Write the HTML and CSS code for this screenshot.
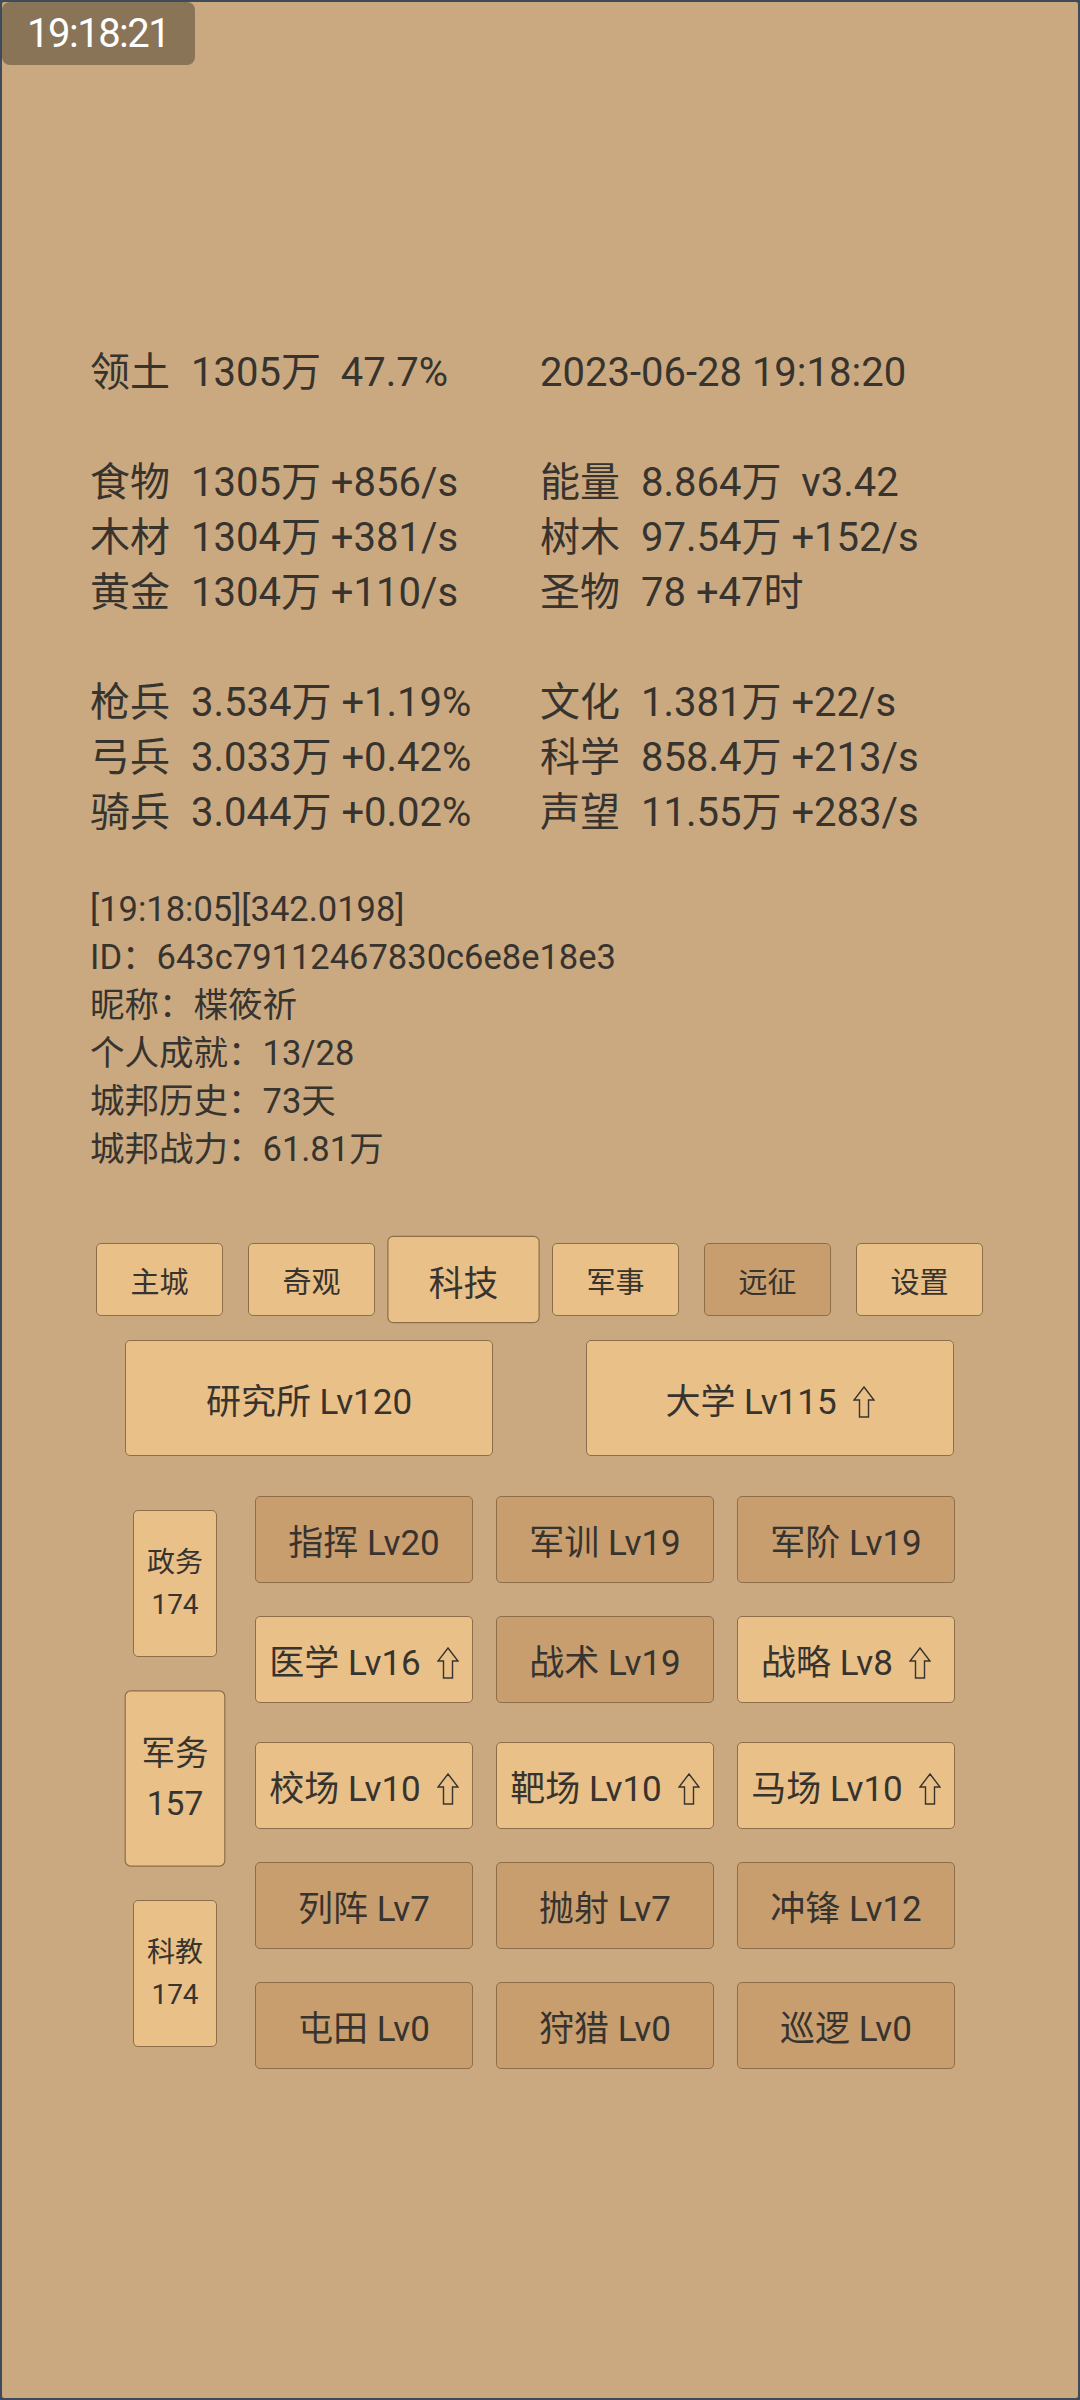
FILE: index.html
```html
<!DOCTYPE html>
<html lang="zh-CN">
<head>
  <meta charset="UTF-8" />
  <meta name="viewport" content="width=device-width, initial-scale=1.0" />
  <title>城邦</title>
  <link rel="stylesheet" href="styles.css">
</head>
<body>
  <div class="screen">

    <!-- Clock badge -->
    <div class="clock">19:18:21</div>

    <!-- Resource stats -->
    <div class="stats">
      <div class="group">
        <div class="cell"><span class="label">领土</span>1305万  47.7%</div>
        <div class="cell">2023-06-28 19:18:20</div>
      </div>
      <div class="group">
        <div class="cell"><span class="label">食物</span>1305万 +856/s</div>
        <div class="cell"><span class="label">能量</span>8.864万  v3.42</div>
        <div class="cell"><span class="label">木材</span>1304万 +381/s</div>
        <div class="cell"><span class="label">树木</span>97.54万 +152/s</div>
        <div class="cell"><span class="label">黄金</span>1304万 +110/s</div>
        <div class="cell"><span class="label">圣物</span>78 +47时</div>
      </div>
      <div class="group">
        <div class="cell"><span class="label">枪兵</span>3.534万 +1.19%</div>
        <div class="cell"><span class="label">文化</span>1.381万 +22/s</div>
        <div class="cell"><span class="label">弓兵</span>3.033万 +0.42%</div>
        <div class="cell"><span class="label">科学</span>858.4万 +213/s</div>
        <div class="cell"><span class="label">骑兵</span>3.044万 +0.02%</div>
        <div class="cell"><span class="label">声望</span>11.55万 +283/s</div>
      </div>
    </div>

    <!-- Player info -->
    <div class="info">
      <div>[19:18:05][342.0198]</div>
      <div>ID：643c79112467830c6e8e18e3</div>
      <div>昵称：楪筱祈</div>
      <div>个人成就：13/28</div>
      <div>城邦历史：73天</div>
      <div>城邦战力：61.81万</div>
    </div>

    <!-- Tabs -->
    <div class="tabs">
      <button class="tab">主城</button>
      <button class="tab">奇观</button>
      <button class="tab active">科技</button>
      <button class="tab">军事</button>
      <button class="tab dark">远征</button>
      <button class="tab">设置</button>
    </div>

    <!-- Buildings -->
    <div class="buildings">
      <button class="big">研究所 Lv120</button>
      <button class="big">大学 Lv115<svg class="up" viewBox="0 0 22 32"><path d="M11 1 L21 14 L15.5 14 L15.5 31 L6.5 31 L6.5 14 L1 14 Z"/></svg></button>
    </div>

    <!-- Tech tree -->
    <div class="tech">
      <div class="side">
        <button class="cat">政务<br>174</button>
        <button class="cat active">军务<br>157</button>
        <button class="cat">科教<br>174</button>
      </div>
      <div class="grid">
        <div class="row">
          <button class="item dark">指挥 Lv20</button>
          <button class="item dark">军训 Lv19</button>
          <button class="item dark">军阶 Lv19</button>
        </div>
        <div class="row">
          <button class="item">医学 Lv16<svg class="up" viewBox="0 0 22 32"><path d="M11 1 L21 14 L15.5 14 L15.5 31 L6.5 31 L6.5 14 L1 14 Z"/></svg></button>
          <button class="item dark">战术 Lv19</button>
          <button class="item">战略 Lv8<svg class="up" viewBox="0 0 22 32"><path d="M11 1 L21 14 L15.5 14 L15.5 31 L6.5 31 L6.5 14 L1 14 Z"/></svg></button>
        </div>
        <div class="row shifted">
          <button class="item">校场 Lv10<svg class="up" viewBox="0 0 22 32"><path d="M11 1 L21 14 L15.5 14 L15.5 31 L6.5 31 L6.5 14 L1 14 Z"/></svg></button>
          <button class="item">靶场 Lv10<svg class="up" viewBox="0 0 22 32"><path d="M11 1 L21 14 L15.5 14 L15.5 31 L6.5 31 L6.5 14 L1 14 Z"/></svg></button>
          <button class="item">马场 Lv10<svg class="up" viewBox="0 0 22 32"><path d="M11 1 L21 14 L15.5 14 L15.5 31 L6.5 31 L6.5 14 L1 14 Z"/></svg></button>
        </div>
        <div class="row">
          <button class="item dark">列阵 Lv7</button>
          <button class="item dark">抛射 Lv7</button>
          <button class="item dark">冲锋 Lv12</button>
        </div>
        <div class="row">
          <button class="item dark">屯田 Lv0</button>
          <button class="item dark">狩猎 Lv0</button>
          <button class="item dark">巡逻 Lv0</button>
        </div>
      </div>
    </div>

  </div>
</body>
</html>
```

FILE: styles.css
```css
* {
  margin: 0;
  padding: 0;
  box-sizing: border-box;
}

body {
  background: #3e4b5b;
  font-family: Roboto, "Noto Sans CJK SC", sans-serif;
  color: #37332e;
}

.screen {
  position: relative;
  width: 1080px;
  height: 2400px;
  border: 2px solid #3e4b5b;
  border-radius: 4px;
  background: #caa980;
  padding-top: 343px;
}

.clock {
  position: absolute;
  top: 0;
  left: 0;
  width: 193px;
  height: 63px;
  background: #8a7457;
  border-radius: 8px;
  color: #fff;
  font-size: 40px;
  letter-spacing: -1.5px;
  line-height: 63px;
  padding-left: 25px;
}

/* Stats */
.stats {
  margin-left: 88px;
  font-size: 40px;
}

.group {
  display: grid;
  grid-template-columns: 450px 1fr;
  grid-auto-rows: 55px;
  margin-bottom: 55px;
}

.group:last-child {
  margin-bottom: 0;
}

.cell {
  line-height: 55px;
  white-space: pre;
}

.label {
  display: inline-block;
  width: 101px;
}

/* Info */
.info {
  margin: 45px 0 0 88px;
  font-size: 34.5px;
  line-height: 48px;
}

/* Buttons shared */
button {
  font-family: Roboto, "Noto Sans CJK SC", sans-serif;
  color: #37332e;
  background: #e9c087;
  border: 1px solid #8d6e4b;
  border-radius: 5px;
  cursor: pointer;
}

button.dark {
  background: #c89e6e;
}

.up {
  width: 22px;
  height: 32px;
  margin-left: 16px;
  vertical-align: -4px;
}

.up path {
  fill: none;
  stroke: #37332e;
  stroke-width: 1.4;
}

/* Tabs */
.tabs {
  display: flex;
  align-items: center;
  gap: 25px;
  margin: 70px 0 0 94px;
  height: 73px;
}

.tab {
  width: 127px;
  height: 73px;
  font-size: 29px;
}

.tab.active {
  transform: scale(1.2);
}

/* Buildings */
.buildings {
  display: flex;
  gap: 93px;
  margin: 24px 0 0 123px;
}

.big {
  width: 368px;
  height: 116px;
  font-size: 35px;
}

/* Tech tree */
.tech {
  display: flex;
  margin: 40px 0 0 131px;
}

.side {
  display: flex;
  flex-direction: column;
  gap: 48px;
  width: 84px;
  padding-top: 14px;
}

.cat {
  width: 84px;
  height: 147px;
  font-size: 28px;
  line-height: 42px;
}

.cat.active {
  transform: scale(1.2);
}

.grid {
  display: flex;
  flex-direction: column;
  gap: 33px;
  margin-left: 38px;
}

.row {
  display: flex;
  gap: 23px;
}

.row.shifted {
  margin-top: 6px;
}

.item {
  width: 218px;
  height: 87px;
  font-size: 35px;
}
```
